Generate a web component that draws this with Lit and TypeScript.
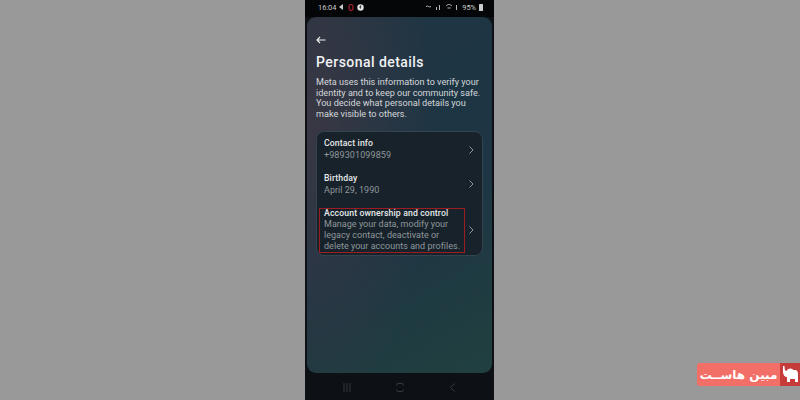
import { LitElement, html, css } from "lit";
import { customElement } from "lit/decorators.js";

const chevron = html`<svg class="chev" width="6" height="10" viewBox="0 0 6 10"><path d="M1.500 1.500L5 5 1.500 8.500" fill="none" stroke="#9aa3a8" stroke-width="0.900"/></svg>`;

@customElement("app-root")
export class AppRoot extends LitElement {
  static styles = css`
    :host { display: block; position: relative; width: 800px; height: 400px; overflow: hidden; background: #999999; font-family: Roboto, "Liberation Sans", sans-serif; }
    .stage { display: flex; height: 400px; padding-left: 305px; box-sizing: border-box; }
    .phone { width: 189px; height: 400px; background: #0d1116; display: flex; flex-direction: column; }
    .status { height: 17px; flex: none; background: #050608; display: flex; align-items: center; justify-content: space-between; padding: 0 11px 3px 13px; box-sizing: border-box; color: #c9cccf; font-size: 7.4px; }
    .status-l, .status-r { display: flex; align-items: center; gap: 3px; }
    .screen { width: 185px; margin-left: 2px; height: 356px; flex: none; border-radius: 9px; box-sizing: border-box; padding: 19px 9px 0; background: radial-gradient(130px 300px at 0% 28%, #3a3744 0%, rgba(58,55,68,0) 100%), linear-gradient(150deg, #1f3543 0%, #1d3544 55%, #21403f 100%); display: flex; flex-direction: column; color: #f1f3f4; }
    .back { display: block; margin-bottom: 9px; flex: none; }
    h1 { margin: 0 0 6px; font-size: 14px; line-height: 18px; font-weight: 500; letter-spacing: 0.45px; color: #f0f2f3; }
    .intro { margin: 0 0 12px; font-size: 9.1px; line-height: 10.6px; color: #d3d7da; }
    .card { width: 167px; height: 125px; flex: none; box-sizing: border-box; border: 1px solid #33444f; border-radius: 8px; background: #18222a; display: flex; flex-direction: column; padding: 2px 8px 0 7px; }
    .row { display: flex; align-items: center; justify-content: space-between; }
    .row.a { height: 31px; margin-bottom: 3px; }
    .row.b { height: 32px; margin-bottom: 7px; }
    .row.c { height: 46px; }
    .title { font-size: 8.7px; line-height: 11px; font-weight: 500; color: #e6e9ea; letter-spacing: 0.12px; }
    .row.a .title, .row.b .title { margin-bottom: 1px; }
    .sub { font-size: 9px; line-height: 11.200px; color: #8f979c; letter-spacing: 0.03px; }
    .phone-num { letter-spacing: 0.1px; }
    .nav { flex: 1; display: flex; align-items: center; justify-content: center; gap: 45px; padding: 2px 0 0 0; }
    .mark { position: absolute; left: 319px; top: 208px; width: 146px; height: 45px; box-sizing: border-box; border: 1.500px solid #9c1c22; }
    .logo { position: absolute; left: 697px; top: 363px; width: 103px; height: 23px; display: flex; border-radius: 3px 0 0 3px; overflow: hidden; }
    .logo-text { width: 83px; background: #f26f68; color: #fff; font-family: "DejaVu Sans", sans-serif; font-weight: 700; font-size: 12px; display: flex; align-items: center; justify-content: center; direction: rtl; white-space: nowrap; }
    .logo-icon { width: 20px; background: #c53c3b; display: flex; align-items: center; justify-content: center; }
  `;

  render() {
    return html`
      <div class="stage">
        <div class="phone">
          <div class="status">
            <div class="status-l">
              <span>16:04</span>
              <svg width="6" height="6" viewBox="0 0 6 6"><path d="M0 3l4-3v6z" fill="#c9cccf"/></svg>
              <svg width="6" height="7" viewBox="0 0 6 7"><rect x="1" y="0.500" width="4" height="6" rx="2" fill="none" stroke="#a51d2a" stroke-width="1.200"/></svg>
              <svg width="7" height="7" viewBox="0 0 7 7"><circle cx="3.500" cy="3.500" r="3.200" fill="#e6e6e6"/><path d="M3 1.500h1.500L3.500 3.200h1L2.800 5.600l.5-1.800h-1z" fill="#222"/></svg>
            </div>
            <div class="status-r">
              <svg width="16" height="6" viewBox="0 0 16 6"><path d="M0 2.500c2-1.500 3 1.500 5 0" fill="none" stroke="#b5b8ba"/><rect x="10" y="3" width="1" height="3" fill="#b5b8ba"/><rect x="13" y="1" width="1" height="5" fill="#b5b8ba"/></svg>
              <svg width="14" height="6" viewBox="0 0 14 6"><path d="M1 2c2-2 4-2 6 0M2.500 4h3" fill="none" stroke="#b5b8ba"/><rect x="11" y="1" width="1" height="5" fill="#b5b8ba"/></svg>
              <span>95%</span>
              <svg width="4" height="7" viewBox="0 0 4 7"><rect width="4" height="7" rx="0.500" fill="#c9cccf"/></svg>
            </div>
          </div>
          <div class="screen">
            <svg class="back" width="10" height="8" viewBox="0 0 10 8"><path d="M9.500 4H1M4 1L1 4l3 3" fill="none" stroke="#eef0f1" stroke-width="1.100"/></svg>
            <h1>Personal details</h1>
            <p class="intro">Meta uses this information to verify your identity and to keep our community safe. You decide what personal details you make visible to others.</p>
            <div class="card">
              <div class="row a">
                <div><div class="title">Contact info</div><div class="sub phone-num">+989301099859</div></div>
                ${chevron}
              </div>
              <div class="row b">
                <div><div class="title">Birthday</div><div class="sub">April 29, 1990</div></div>
                ${chevron}
              </div>
              <div class="row c">
                <div><div class="title">Account ownership and control</div><div class="sub">Manage your data, modify your<br>legacy contact, deactivate or<br>delete your accounts and profiles.</div></div>
                ${chevron}
              </div>
            </div>
          </div>
          <div class="nav">
            <svg width="8" height="9" viewBox="0 0 8 9"><path d="M1 0v9M4 0v9M7 0v9" stroke="#33383d" stroke-width="1"/></svg>
            <svg width="8" height="9" viewBox="0 0 8 9"><path d="M1.500 0.500h5l1 2M1.500 8.500h5l1-2M1.500 0.500l-1 2M1.500 8.500l-1-2" fill="none" stroke="#33383d" stroke-width="1"/></svg>
            <svg width="7" height="9" viewBox="0 0 7 9"><path d="M6 0.500L1 4.500l5 4" fill="none" stroke="#33383d" stroke-width="1"/></svg>
          </div>
        </div>
      </div>
      <div class="mark"></div>
      <div class="logo">
        <div class="logo-text">مبین هاســت</div>
        <div class="logo-icon">
          <svg width="17" height="17" viewBox="0 0 17 17"><path d="M1 0h1.500c0 3 .5 5 2 5 .5-1.500 2-2.500 4-2.500 1.500 0 2 1 3 1.500h2c1.500 0 2.500 2 2.500 4v8h-3v-3H8v3H5v-5c-2 0-4-2-4-5z" fill="#fff"/></svg>
        </div>
      </div>
    `;
  }
}
